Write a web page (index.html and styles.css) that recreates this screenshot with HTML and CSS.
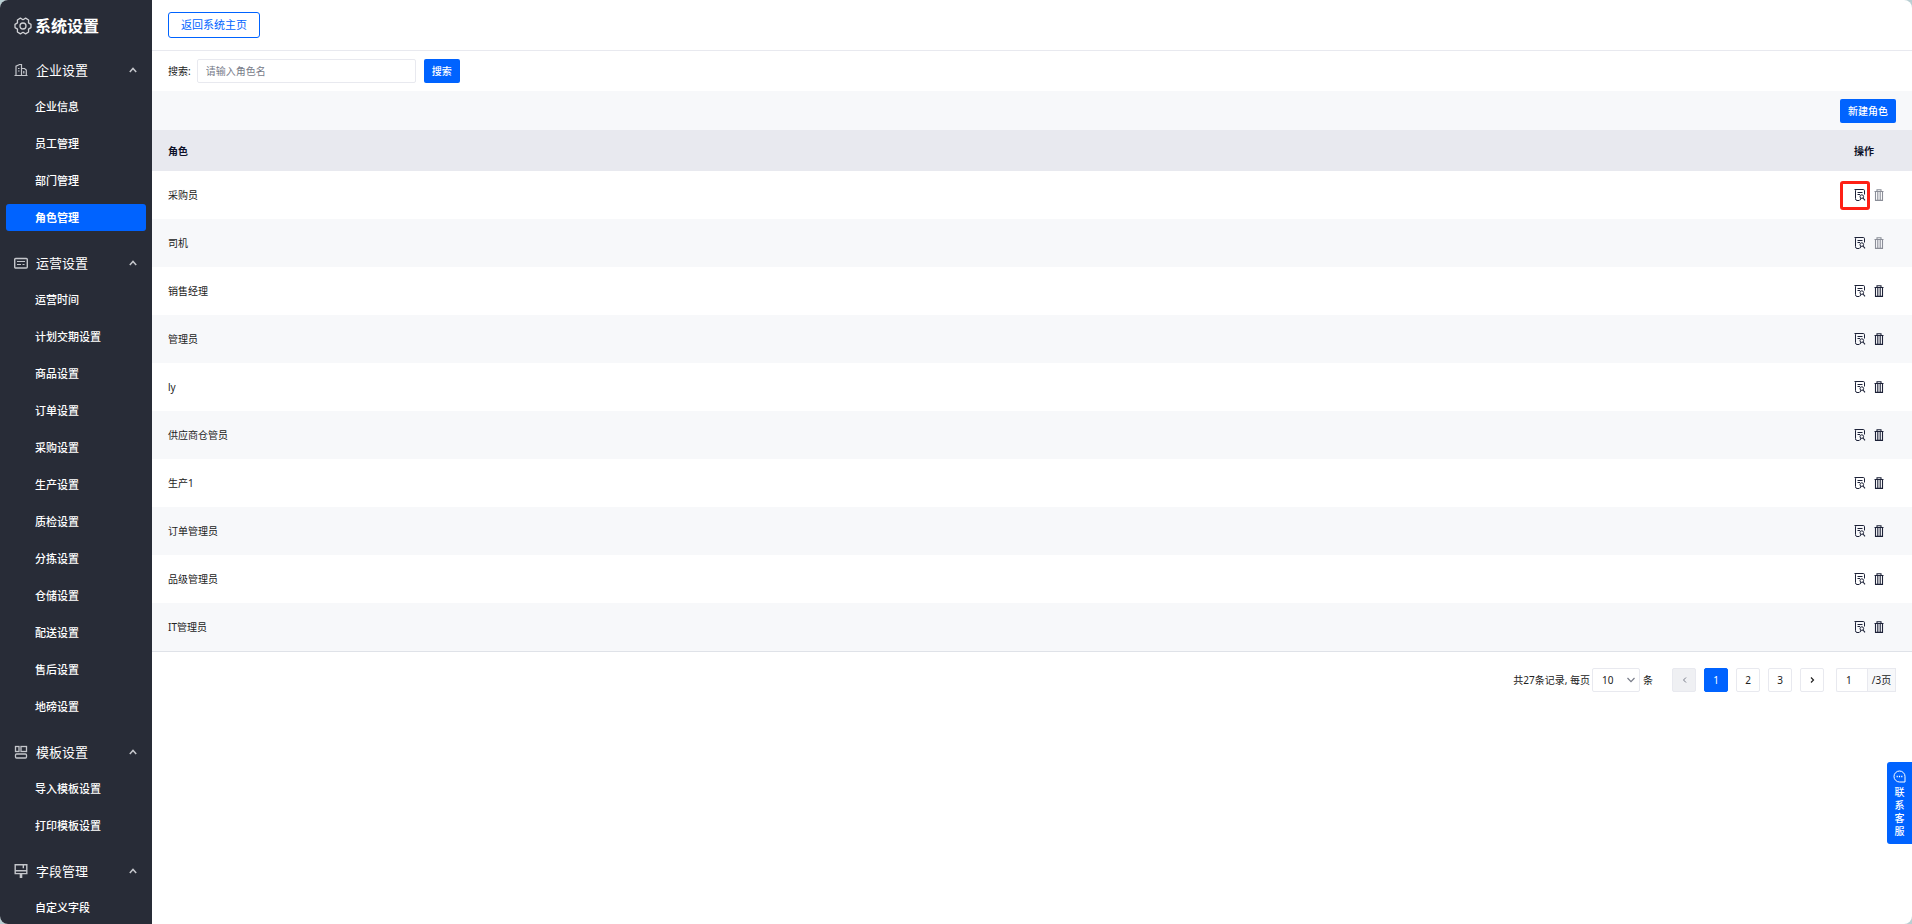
FILE: index.html
```html
<!DOCTYPE html>
<html lang="zh-CN">
<head>
  <meta charset="UTF-8">
  <meta name="viewport" content="width=device-width, initial-scale=1.0">
  <title>系统设置 - 角色管理</title>
  <link rel="stylesheet" href="styles.css">
</head>
<body>
  <!-- Shared icons -->
  <svg class="sprite" aria-hidden="true">
    <symbol id="icon-up" viewBox="0 0 8 6">
      <path d="M0.8 5 4 1.4 7.2 5" fill="none" stroke="currentColor" stroke-width="1.5"/>
    </symbol>
    <symbol id="icon-down" viewBox="0 0 8 6">
      <path d="M0.5 1 4 4.6 7.5 1" fill="none" stroke="currentColor" stroke-width="1.2"/>
    </symbol>
    <symbol id="icon-detail" viewBox="0 0 12 12">
      <path d="M10.5 5.5V1.7Q10.5 0.5 9.3 0.5H2.7Q1.5 0.5 1.5 1.7V9.5Q1.5 11.5 3 11.5H5.5M0.5 0.5H3M3.5 3.5H8.5M3.5 5.5H6" fill="none" stroke="currentColor" stroke-width="1"/>
      <circle cx="7.8" cy="7.6" r="1.8" fill="none" stroke="currentColor" stroke-width="1"/>
      <path d="M9 9 11 11.4M7 9.2 6 11" fill="none" stroke="currentColor" stroke-width="1.1"/>
    </symbol>
    <symbol id="icon-trash" viewBox="0 0 10 12">
      <path d="M0.5 2.5H9.5M3 2.5V0.8H7V2.5M1.5 2.5V11.4H8.5V2.5M3.8 3V11M6.2 3V11" fill="none" stroke="currentColor" stroke-width="1.1"/>
    </symbol>
  </svg>

  <div class="app">
    <!-- Sidebar -->
    <aside class="sidebar">
      <h1 class="logo">
        <svg width="18" height="18" viewBox="0 0 18 18" fill="none" stroke="currentColor" stroke-width="1.3" stroke-linejoin="round">
          <path d="M17 7.4V10.6L14.5 12.1 14.6 15 11.6 16.9 9 15.3 6.4 16.9 3.4 15 3.5 12.1 1 10.6V7.4L3.5 5.9 3.4 3 6.4 1.1 9 2.7 11.6 1.1 14.6 3 14.5 5.9Z"/>
          <circle cx="9" cy="9" r="3"/>
        </svg>
        系统设置
      </h1>

      <nav>
        <section class="menu-group">
          <button class="menu-title" type="button">
            <svg width="14" height="14" viewBox="0 0 14 14" fill="none" stroke="currentColor" stroke-width="1.2"><path d="M0.5 12.5H13.5M2 12.5V3.2L5.5 1.5H7.5V12.5M7.5 5.5H10.5L12.3 7V12.5M4 5.5H5.5M4 8H5.5M9.8 8V10.5"/></svg>
            <span>企业设置</span>
            <svg class="arrow"><use href="#icon-up"/></svg>
          </button>
          <a class="menu-item" href="#">企业信息</a>
          <a class="menu-item" href="#">员工管理</a>
          <a class="menu-item" href="#">部门管理</a>
          <a class="menu-item active" href="#">角色管理</a>
        </section>

        <section class="menu-group">
          <button class="menu-title" type="button">
            <svg width="14" height="14" viewBox="0 0 14 14" fill="none" stroke="currentColor"><rect x="0.7" y="2.5" width="12.6" height="9.5" rx="1" stroke-width="1.4"/><path d="M3 5.5H11M3 8.5H7M8.5 8.5H10.5"/></svg>
            <span>运营设置</span>
            <svg class="arrow"><use href="#icon-up"/></svg>
          </button>
          <a class="menu-item" href="#">运营时间</a>
          <a class="menu-item" href="#">计划交期设置</a>
          <a class="menu-item" href="#">商品设置</a>
          <a class="menu-item" href="#">订单设置</a>
          <a class="menu-item" href="#">采购设置</a>
          <a class="menu-item" href="#">生产设置</a>
          <a class="menu-item" href="#">质检设置</a>
          <a class="menu-item" href="#">分拣设置</a>
          <a class="menu-item" href="#">仓储设置</a>
          <a class="menu-item" href="#">配送设置</a>
          <a class="menu-item" href="#">售后设置</a>
          <a class="menu-item" href="#">地磅设置</a>
        </section>

        <section class="menu-group">
          <button class="menu-title" type="button">
            <svg width="14" height="14" viewBox="0 0 14 14" fill="none" stroke="currentColor" stroke-width="1.3"><rect x="1.5" y="1.5" width="3.5" height="5"/><rect x="7" y="1.5" width="5.5" height="5"/><rect x="1.5" y="9" width="11" height="4" rx="1"/></svg>
            <span>模板设置</span>
            <svg class="arrow"><use href="#icon-up"/></svg>
          </button>
          <a class="menu-item" href="#">导入模板设置</a>
          <a class="menu-item" href="#">打印模板设置</a>
        </section>

        <section class="menu-group">
          <button class="menu-title" type="button">
            <svg width="14" height="14" viewBox="0 0 14 14" fill="none" stroke="currentColor" stroke-width="1.4"><path d="M1.2 0.8H12.8V9.6H1.2ZM1 6.8H13M9.3 1V4.2"/><path d="M7 9.8V14" stroke-width="2.6"/></svg>
            <span>字段管理</span>
            <svg class="arrow"><use href="#icon-up"/></svg>
          </button>
          <a class="menu-item" href="#">自定义字段</a>
        </section>
      </nav>
    </aside>

    <!-- Main content -->
    <main class="content">
      <header class="topbar">
        <button class="back-button" type="button">返回系统主页</button>
      </header>

      <form class="search" onsubmit="return false">
        <label for="keyword">搜索:</label>
        <input type="text" id="keyword" placeholder="请输入角色名">
        <button class="primary" type="submit">搜索</button>
      </form>

      <div class="toolbar">
        <button class="primary" type="button">新建角色</button>
      </div>

      <table class="roles">
        <thead>
          <tr><th>角色</th><th class="actions">操作</th></tr>
        </thead>
        <tbody id="role-rows"></tbody>
      </table>

      <div class="pagination">
        <label for="page-size">共27条记录, 每页</label>
        <span class="select-box">
          <select id="page-size">
            <option>10</option>
            <option>20</option>
            <option>50</option>
          </select>
          <svg><use href="#icon-down"/></svg>
        </span>
        <span class="unit">条</span>
        <div class="pages">
          <button type="button" disabled aria-label="上一页"><svg width="5" height="8" viewBox="0 0 5 8"><path d="M4 1.5 1.5 4 4 6.5" fill="none" stroke="currentColor"/></svg></button>
          <button type="button" class="current">1</button>
          <button type="button">2</button>
          <button type="button">3</button>
          <button type="button" aria-label="下一页"><svg width="5" height="8" viewBox="0 0 5 8"><path d="M1 1.5 3.5 4 1 6.5" fill="none" stroke="currentColor" stroke-width="1.2"/></svg></button>
        </div>
        <div class="jump">
          <input type="text" id="page-number" value="1" aria-label="页码">
          <label for="page-number">/3页</label>
        </div>
      </div>
    </main>

    <button class="service" type="button">
      <svg width="13" height="13" viewBox="0 0 13 13" fill="none" stroke="currentColor"><path d="M6.5 12A5.5 5.5 0 1 1 12 6.5V12Z"/><path d="M3.6 6.5H4.8M5.9 6.5H7.1M8.2 6.5H9.4" stroke-width="1.3"/></svg>
      <span>联</span><span>系</span><span>客</span><span>服</span>
    </button>
  </div>

  <script>
    const roles = [
      { name: '采购员', locked: true, marked: true },
      { name: '司机', locked: true },
      { name: '销售经理' },
      { name: '管理员' },
      { name: 'ly' },
      { name: '供应商仓管员' },
      { name: '生产1' },
      { name: '订单管理员' },
      { name: '品级管理员' },
      { name: 'IT管理员' }
    ];

    // Fill the role table
    document.getElementById('role-rows').innerHTML = roles.map(role => `
      <tr>
        <td>${role.name}</td>
        <td class="actions">
          <div class="icons">
            <button type="button" class="detail${role.marked ? ' marked' : ''}" aria-label="详情"><svg><use href="#icon-detail"/></svg></button>
            <button type="button" class="trash" aria-label="删除" ${role.locked ? 'disabled' : ''}><svg><use href="#icon-trash"/></svg></button>
          </div>
        </td>
      </tr>`).join('');
  </script>
</body>
</html>
```
FILE: styles.css
```css
*, *::after {
  box-sizing: border-box;
}
body {
  margin: 0;
  background-color: #b9cfd3;
  color: #222;
  font-family: "Noto Sans", "Noto Sans CJK SC", sans-serif;
  font-size: 10px;
  line-height: 16px;
}
button, input, select {
  margin: 0;
  padding: 0;
  border: none;
  background: none;
  color: inherit;
  font: inherit;
}
button {
  cursor: pointer;
}
.sprite {
  display: none;
}
.app {
  display: flex;
  min-height: 100vh;
  border-radius: 8px;
  overflow: hidden;
  background-color: #fff;
}

/* Sidebar */
.sidebar {
  flex: none;
  width: 152px;
  background-color: #282c37;
  color: #fff;
}
.logo {
  display: flex;
  align-items: center;
  gap: 3px;
  height: 52px;
  margin: 0 0 4px;
  padding-left: 14px;
  font-size: 16px;
  font-weight: bold;
  line-height: 24px;
}
.logo svg {
  color: #d0d1d5;
}
.menu-group {
  margin-bottom: 18px;
}
.menu-group:last-child {
  margin-bottom: 0;
}
.menu-title {
  display: flex;
  align-items: center;
  gap: 8px;
  width: 100%;
  height: 28px;
  margin-bottom: 9px;
  padding: 0 15px 0 14px;
  font-size: 13px;
}
.menu-title svg {
  color: #c4c6cb;
}
.menu-title .arrow {
  width: 8px;
  height: 6px;
  margin-left: auto;
}
.menu-item {
  display: block;
  height: 27px;
  margin: 0 6px 10px;
  padding-left: 29px;
  border-radius: 3px;
  color: #fff;
  font-size: 11px;
  font-weight: 500;
  line-height: 27px;
  text-decoration: none;
}
.menu-item:last-child {
  margin-bottom: 0;
}
.menu-item.active {
  background-color: #0063ff;
  font-weight: bold;
}

/* Content */
.content {
  flex: 1;
  min-width: 0;
}
.topbar {
  display: flex;
  align-items: center;
  height: 51px;
  padding: 0 16px;
  border-bottom: 1px solid #e8e9ef;
}
.back-button {
  height: 26px;
  padding: 0 12px;
  border: 1px solid #0063ff;
  border-radius: 3px;
  color: #0063ff;
  font-size: 11px;
}
.search {
  display: flex;
  align-items: center;
  height: 40px;
  padding: 0 16px;
}
.search input {
  width: 219px;
  height: 24px;
  margin: 0 8px 0 6px;
  padding: 0 8px;
  border: 1px solid #e8e9ef;
  border-radius: 2px;
}
.search input::placeholder {
  color: #777b88;
  opacity: 1;
}
.primary {
  height: 24px;
  padding: 0 8px;
  border-radius: 2px;
  background-color: #0063ff;
  color: #fff;
  font-weight: 500;
}
.toolbar {
  display: flex;
  align-items: center;
  justify-content: flex-end;
  height: 39px;
  padding: 0 16px;
  background-color: #f7f8fa;
}

/* Role table */
.roles {
  width: 100%;
  border-collapse: separate;
  border-spacing: 0;
  border-bottom: 1px solid #dfe2e8;
}
.roles th {
  height: 41px;
  padding: 0 16px;
  background-color: #e8e9ef;
  color: #0d1129;
  font-weight: bold;
  text-align: left;
}
.roles td {
  height: 48px;
  padding: 0 16px;
}
.roles .actions {
  width: 74px;
}
.roles tbody tr:nth-child(even) {
  background-color: #f7f8fa;
}
.icons {
  display: flex;
  gap: 8px;
}
.icons button {
  display: flex;
  position: relative;
  color: #1d2238;
}
.icons svg {
  width: 12px;
  height: 12px;
}
.icons .trash svg {
  width: 10px;
}
.icons button:disabled {
  color: #8b8e98;
}
.icons .marked::after {
  content: "";
  position: absolute;
  top: -8px;
  left: -14px;
  width: 30px;
  height: 29px;
  border: 3px solid #fe2015;
  border-radius: 3px;
}

/* Pagination */
.pagination {
  display: flex;
  align-items: center;
  justify-content: flex-end;
  padding: 16px;
}
.select-box {
  position: relative;
  margin: 0 3px 0 2px;
}
.select-box select {
  display: block;
  appearance: none;
  width: 48px;
  height: 24px;
  padding: 0 9px;
  border: 1px solid #e8e9ef;
  border-radius: 2px;
}
.select-box svg {
  position: absolute;
  top: 9px;
  right: 5px;
  width: 8px;
  height: 6px;
  color: #777b88;
  pointer-events: none;
}
.pages {
  display: flex;
  gap: 8px;
  margin: 0 12px 0 19px;
}
.pages button {
  display: flex;
  align-items: center;
  justify-content: center;
  width: 24px;
  height: 24px;
  border: 1px solid #e8e9ef;
  border-radius: 2px;
}
.pages button:disabled {
  background-color: #eff0f3;
  color: #777b88;
}
.pages .current {
  border-color: #0063ff;
  background-color: #0063ff;
  color: #fff;
}
.jump {
  display: flex;
}
.jump input {
  width: 31px;
  height: 24px;
  padding: 0 9px;
  border: 1px solid #e8e9ef;
  border-right: none;
  border-radius: 2px 0 0 2px;
}
.jump label {
  width: 29px;
  height: 24px;
  border: 1px solid #e8e9ef;
  background-color: #f7f8fa;
  line-height: 22px;
  text-align: center;
}

/* Floating contact button */
.service {
  display: flex;
  position: fixed;
  right: 0;
  bottom: 80px;
  flex-direction: column;
  align-items: center;
  width: 25px;
  padding: 8px 0 6px;
  border-radius: 3px 0 0 3px;
  background-color: #0063ff;
  color: #fff;
  font-weight: 500;
  line-height: 13px;
}
.service svg {
  margin-bottom: 3px;
}
```
